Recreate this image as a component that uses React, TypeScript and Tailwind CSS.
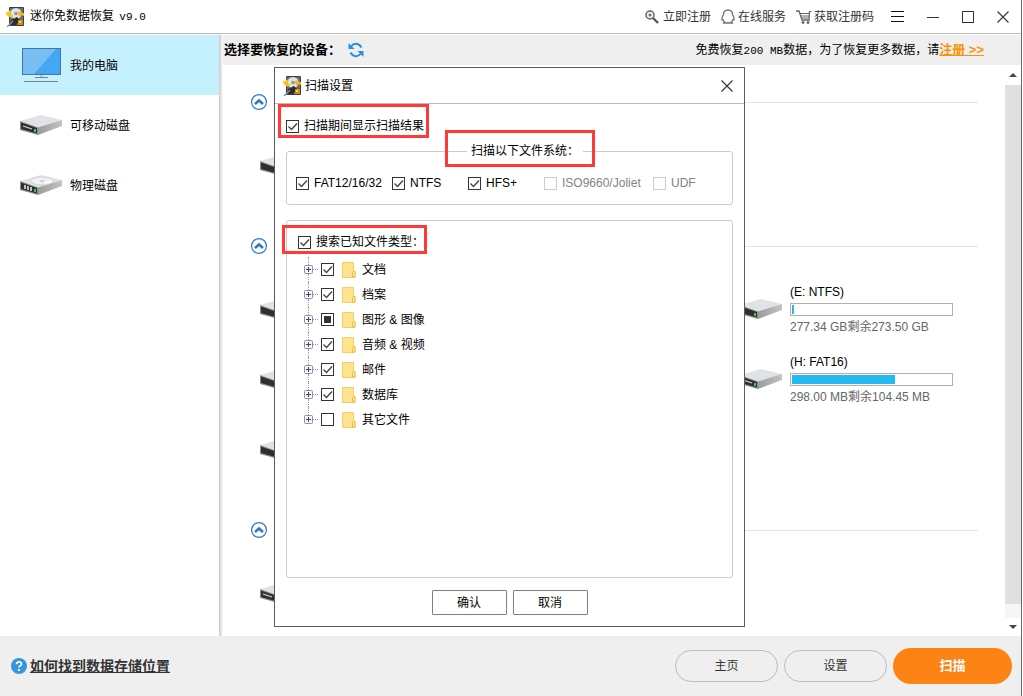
import { useId, type ReactNode } from "react";

function AppIcon() {
  return (
    <svg width="18" height="20" viewBox="0 0 18 20" className="shrink-0">
      <rect x="3" y="0" width="15" height="19" rx="1" fill="#3d4043" />
      <rect x="4" y="1" width="13" height="17" fill="#6b6f73" />
      <circle cx="10" cy="6.5" r="5.5" fill="#dfe3e6" />
      <circle cx="10" cy="6.5" r="1.8" fill="#8f979d" />
      <path d="M5 13l6-3 3 3-4 5H4z" fill="#2b2d2f" />
      <path d="M0 5h3c0 2 2 3 4 3v2.500C3 11 0 9 0 5z" fill="#f7c52b" />
      <path d="M11 6l3-2 1 1.500 3 .5v3l-3-1-1 2z" fill="#f7b51c" />
      <path d="M2.500 3l3.500 2-3 3z" fill="#f7c52b" />
      <rect x="12" y="13" width="5" height="5" fill="#d9890b" />
      <rect x="13" y="14" width="2" height="2" fill="#ffd84c" />
      <path d="M1 20l6-6" stroke="#8a8f93" strokeWidth="1.500" />
    </svg>
  );
}

function MonitorIcon() {
  return (
    <svg width="40" height="35" viewBox="0 0 40 35" className="shrink-0">
      <rect x="0.500" y="0.500" width="38" height="26" fill="#43a7f3" stroke="#4c7594" />
      <path d="M1 1h33L12 26H1z" fill="#76bff5" />
      <rect x="18" y="27" width="3" height="3" fill="#b9c6d0" />
      <path d="M13 29.500h13M2 33.500h34" stroke="#6d8798" />
    </svg>
  );
}

function DriveIcon({ variant = "slot" }: { variant?: "plain" | "slot" | "disk" }) {
  return (
    <svg width="42" height="21" viewBox="0 0 42 21" className="shrink-0">
      <defs>
        <linearGradient id="drive-side" x1="0" y1="0" x2="1" y2="0">
          <stop offset="0" stopColor="#9a9b9d" />
          <stop offset="1" stopColor="#c2c3c5" />
        </linearGradient>
      </defs>
      <path d="M0 6L21 0l21 5-24 8z" fill="#e1e2e6" />
      <path d="M18 12.500L42 5v6L18 20z" fill="url(#drive-side)" />
      <path d="M0 6l18 6.500V20L0 15z" fill="#8b8c8e" />
      <path d="M1 7.500l16 5.500v5.500L1 14z" fill="#2e2f31" />
      {variant === "slot" && <path d="M3 11l9 3" stroke="#d5d6d8" strokeWidth="1.200" />}
      {variant === "disk" && (
        <>
          <path d="M5 10v4M8 11v4M11 12v4" stroke="#f2f2f2" strokeWidth="1.500" />
          <ellipse cx="22" cy="6" rx="11" ry="4" fill="#f1f1f3" stroke="#c9cacd" strokeWidth="0.700" />
          <ellipse cx="22" cy="6" rx="2" ry="1" fill="#c9cacd" />
          <path d="M25 8l7-2" stroke="#fff" strokeWidth="1.500" />
        </>
      )}
      <rect x="14" y="14" width="2" height="3" fill="#45c94f" />
    </svg>
  );
}

function FolderIcon() {
  return (
    <svg width="14" height="16" viewBox="0 0 14 16" className="shrink-0">
      <path d="M0.500 0.500h11v9h1.500v6H0.500z" fill="#ffe48f" stroke="#f3cf63" />
      <path d="M10.500 15V10.500l1-1h1.500V15z" fill="#ffe9a6" stroke="#e9bd3c" />
    </svg>
  );
}

function CloseIcon() {
  return (
    <svg width="12" height="12" viewBox="0 0 12 12">
      <path d="M0.500 0.500l11 11M11.500 0.500l-11 11" stroke="#333" strokeWidth="1.100" />
    </svg>
  );
}

type CheckProps = {
  children?: ReactNode;
  label?: string;
  state?: "on" | "off" | "mixed";
  disabled?: boolean;
};

function Check({ children, label, state = "on", disabled }: CheckProps) {
  const id = useId();
  return (
    <div className="flex h-4 items-center gap-[5px]">
      <span className="grid">
        <input
          id={id}
          type="checkbox"
          aria-label={label}
          defaultChecked={state === "on"}
          disabled={disabled}
          ref={(el) => {
            if (el) el.indeterminate = state === "mixed";
          }}
          className="peer size-[13px] appearance-none border border-[#333] bg-white [grid-area:1/1] disabled:border-[#ccc]"
        />
        <svg
          viewBox="0 0 13 13"
          className="pointer-events-none invisible size-[13px] [grid-area:1/1] peer-checked:visible"
        >
          <path d="M2.500 6.500l3 3 5.500-6" fill="none" stroke="#444" strokeWidth="1.400" />
        </svg>
        <span className="pointer-events-none invisible m-[3px] size-[7px] bg-[#333] [grid-area:1/1] peer-indeterminate:visible" />
      </span>
      {children && (
        <label htmlFor={id} className={disabled ? "whitespace-nowrap text-[#838383]" : "whitespace-nowrap"}>
          {children}
        </label>
      )}
    </div>
  );
}

const fileTypes: { name: string; state: "on" | "off" | "mixed" }[] = [
  { name: "文档", state: "on" },
  { name: "档案", state: "on" },
  { name: "图形 & 图像", state: "mixed" },
  { name: "音频 & 视频", state: "on" },
  { name: "邮件", state: "on" },
  { name: "数据库", state: "on" },
  { name: "其它文件", state: "off" },
];

function FileTypeTree() {
  return (
    <ul className="mt-[7px] ml-1.5">
      {fileTypes.map((type, i) => (
        <li key={type.name} className="flex h-[25px] items-center">
          <div className="flex h-full w-[9px] flex-col items-center">
            <span className="w-px flex-1 border-l border-dotted border-[#999]" />
            <button aria-label={`展开${type.name}`} className="block">
              <svg width="9" height="9" viewBox="0 0 9 9">
                <rect x="0.500" y="0.500" width="8" height="8" rx="1" fill="#f7f7f7" stroke="#919191" />
                <path d="M2 4.500h5M4.500 2v5" stroke="#2b4a9b" />
              </svg>
            </button>
            {i < fileTypes.length - 1 ? (
              <span className="w-px flex-1 border-l border-dotted border-[#999]" />
            ) : (
              <span className="flex-1" />
            )}
          </div>
          <span className="mr-[3px] w-[5px] border-t border-dotted border-[#999]" />
          <Check state={type.state} label={type.name} />
          <span className="mr-1.5 ml-2">
            <FolderIcon />
          </span>
          <span>{type.name}</span>
        </li>
      ))}
    </ul>
  );
}

function ScanDialog() {
  return (
    <div className="pointer-events-none fixed inset-0 flex items-center justify-center pr-1 pb-0.5">
      <div
        role="dialog"
        aria-label="扫描设置"
        className="pointer-events-auto relative w-[471px] border border-[#5c5c5c] bg-white"
      >
        <div className="flex h-9 items-center border-b border-[#b9b9b9] pr-[11px] pl-2">
          <AppIcon />
          <h2 className="ml-1">扫描设置</h2>
          <button aria-label="关闭" className="ml-auto">
            <CloseIcon />
          </button>
        </div>

        <div className="px-[11px] pt-3.5 pb-[11px]">
          <Check>扫描期间显示扫描结果</Check>

          <fieldset className="mt-[9px] rounded-[3px] border border-[#ccc] px-[9px] pt-4 pb-[13px]">
            <legend className="ml-[171px] px-1 leading-4">扫描以下文件系统：</legend>
            <div className="grid grid-cols-[96px_76px_76px_109px_auto]">
              <Check>FAT12/16/32</Check>
              <Check>NTFS</Check>
              <Check>HFS+</Check>
              <Check state="off" disabled>
                ISO9660/Joliet
              </Check>
              <Check state="off" disabled>
                UDF
              </Check>
            </div>
          </fieldset>

          <div className="mt-[15px] min-h-[358px] rounded-[3px] border border-[#ccc] px-[11px] pt-[13px]">
            <Check>搜索已知文件类型：</Check>
            <FileTypeTree />
          </div>

          <div className="mt-3 flex justify-center gap-1.5">
            <button className="h-[25px] w-[75px] rounded-[1px] border border-[#708599]">确认</button>
            <button className="h-[25px] w-[75px] rounded-[1px] border border-[#708599]">取消</button>
          </div>
        </div>

        {/* Highlight frames */}
        <span className="pointer-events-none absolute top-9 left-[3px] h-[34px] w-[151px] border-3 border-[#ff3838]" />
        <span className="pointer-events-none absolute top-[62px] left-[170px] h-[37px] w-[150px] border-3 border-[#ff3838]" />
        <span className="pointer-events-none absolute top-[157px] left-[7px] h-[29px] w-[145px] border-3 border-[#ff3838]" />
      </div>
    </div>
  );
}

function DriveGroup({ children }: { children: ReactNode }) {
  return (
    <section className="mb-[38px]">
      <div className="flex h-4 items-center">
        <button aria-label="折叠">
          <svg width="16" height="16" viewBox="0 0 16 16" className="block">
            <circle cx="8" cy="8" r="7.400" fill="#fff" stroke="#2f78c8" strokeWidth="1.200" />
            <path d="M4 10l4-3.500L12 10" fill="none" stroke="#2f78c8" strokeWidth="2.600" />
          </svg>
        </button>
        <span className="ml-10 flex-1 border-t border-[#e4e4e4]" />
      </div>
      <div className="mt-5 ml-[9px] grid grid-cols-[240px_240px_1fr]">{children}</div>
    </section>
  );
}

type DriveProps = {
  variant?: "plain" | "slot";
  name?: string;
  size?: string;
  free?: string;
  used?: number;
};

function Drive({ variant, name, size, free, used }: DriveProps) {
  return (
    <div className="flex h-[70px] items-center">
      <DriveIcon variant={variant} />
      {name && (
        <div className="ml-2">
          <p className="leading-4">{name}</p>
          <div className="my-[3px] h-[13px] w-[163px] border border-[#b0b0b0] p-px">
            <div className="h-full bg-[#24b9ef]" style={{ width: `${used}%` }} />
          </div>
          <p className="leading-4 text-[#666]">
            {size}剩余{free}
          </p>
        </div>
      )}
    </div>
  );
}

function TitleBar() {
  return (
    <header className="mb-px flex h-[34px] shrink-0 items-center border-b border-[#b9b9b9] pr-3 pl-1.5">
      <AppIcon />
      <h1 className="ml-1.5 whitespace-nowrap">
        迷你免数据恢复 <span className="ml-0.5 font-['Liberation_Mono'] text-[11px]">v9.0</span>
      </h1>
      <nav className="ml-auto flex items-center text-[#333]">
        <button className="flex items-center gap-1">
          <svg width="14" height="14" viewBox="0 0 14 14">
            <circle cx="5" cy="5" r="4" fill="#eee" stroke="#666" strokeWidth="1.500" />
            <circle cx="5" cy="5" r="1.500" fill="#777" />
            <path d="M8 8l5 5" stroke="#555" strokeWidth="2.400" />
          </svg>
          立即注册
        </button>
        <button className="ml-2.5 flex items-center gap-[3px]">
          <svg width="14" height="15" viewBox="0 0 14 15" fill="#fff" stroke="#707070" strokeWidth="1.300">
            <path d="M7 1C4 1 2.500 3 2.500 5.500 1.500 7 .7 9 1 11l1-.3c.3 1 .8 1.500 1.500 2l-.8 1.300h3.600l.7-.4.7.4h3.600l-.8-1.300c.7-.5 1.200-1 1.500-2l1 .3c.3-2-.5-4-1.500-5.500C11.500 3 10 1 7 1z" />
          </svg>
          在线服务
        </button>
        <button className="ml-2.5 flex items-center gap-0.5">
          <svg width="16" height="14" viewBox="0 0 16 14" fill="none" stroke="#666">
            <path d="M0 1h3l3 9h8" strokeWidth="1.300" />
            <path d="M4 3.500h9M5 6h8M6 8h7M15.500 1.500h-2L13 9" strokeWidth="1.200" />
            <circle cx="7" cy="12.500" r="1" fill="#555" />
            <circle cx="12" cy="12.500" r="1" fill="#555" />
          </svg>
          获取注册码
        </button>
        <button aria-label="菜单" className="ml-[17px]">
          <svg width="14" height="12" viewBox="0 0 14 12">
            <path d="M0 0.500h13M0 5.500h13M0 10.500h13" stroke="#111" />
          </svg>
        </button>
        <button aria-label="最小化" className="ml-[22px]">
          <svg width="12" height="12" viewBox="0 0 12 12">
            <path d="M0 6.500h12" stroke="#333" />
          </svg>
        </button>
        <button aria-label="最大化" className="ml-[23px]">
          <svg width="12" height="12" viewBox="0 0 12 12">
            <rect x="0.500" y="0.500" width="11" height="11" fill="none" stroke="#333" />
          </svg>
        </button>
        <button aria-label="关闭" className="ml-[23px]">
          <CloseIcon />
        </button>
      </nav>
    </header>
  );
}

function Sidebar() {
  return (
    <nav className="w-[219px] shrink-0">
      <button className="flex h-[60px] w-full items-center bg-[#c5f1ff] pl-[22px]">
        <MonitorIcon />
        <span className="ml-2 pt-0.5">我的电脑</span>
      </button>
      <button className="flex h-[60px] w-full items-center pl-5">
        <DriveIcon />
        <span className="ml-2 pt-0.5">可移动磁盘</span>
      </button>
      <button className="flex h-[60px] w-full items-center pl-5">
        <DriveIcon variant="disk" />
        <span className="ml-2 pt-0.5">物理磁盘</span>
      </button>
    </nav>
  );
}

function ScrollBar() {
  return (
    <div className="flex w-4 shrink-0 flex-col">
      <span className="flex h-5 items-center justify-center">
        <svg width="8" height="4" viewBox="0 0 8 4">
          <path d="M0 4l4-4 4 4z" fill="#444" />
        </svg>
      </span>
      <span className="flex-1 bg-[#e0e0e0]" />
      <span className="h-3.5 bg-[#f6f6f6]" />
      <span className="flex h-[18px] items-center justify-center">
        <svg width="8" height="4" viewBox="0 0 8 4">
          <path d="M0 0h8L4 4z" fill="#444" />
        </svg>
      </span>
    </div>
  );
}

export default function App() {
  return (
    <div className="mr-px flex h-screen flex-col overflow-hidden border-r border-[#6a6a6a] bg-white font-['Liberation_Sans','Noto_Sans_CJK_SC',sans-serif] text-xs text-black">
      <TitleBar />

      <div className="flex min-h-0 flex-1">
        <Sidebar />
        <div className="w-1 shrink-0 bg-linear-to-r from-[#c8c8c8] to-white" />
        <main className="flex min-w-0 flex-1 flex-col">
          <div className="flex h-[30px] shrink-0 items-center bg-[#efefef] pr-[37px] pl-px whitespace-nowrap">
            <h2 className="text-[13px] font-bold">选择要恢复的设备：</h2>
            <button aria-label="刷新" className="ml-[7px]">
              <svg width="16" height="16" viewBox="0 0 16 16" fill="none" stroke="#2f8fdf" strokeWidth="2">
                <path d="M3 4.500C6 .5 11 1 13.500 5.500M13 11.500C10 15.500 5 15 2.500 10.500" />
                <path d="M0.500 1v6h6zM15.500 15V9h-6z" fill="#2f8fdf" stroke="none" />
              </svg>
            </button>
            <p className="ml-auto">
              免费恢复<span className="font-['Liberation_Mono'] text-[11px]">200 MB</span>
              数据，为了恢复更多数据，请
              <a href="#register" className="text-[13px] font-bold text-[#ff9100] underline">
                注册 &gt;&gt;
              </a>
            </p>
          </div>

          <div className="flex min-h-0 flex-1">
            <div className="min-w-0 flex-1 overflow-hidden pt-[29px] pr-[27px] pl-7">
              <DriveGroup>
                <Drive variant="plain" />
              </DriveGroup>
              <DriveGroup>
                <Drive variant="plain" />
                <span />
                <Drive variant="plain" name="(E: NTFS)" size="277.34 GB" free="273.50 GB" used={1} />
                <Drive variant="plain" />
                <span />
                <Drive variant="slot" name="(H: FAT16)" size="298.00 MB" free="104.45 MB" used={65} />
                <Drive variant="plain" />
              </DriveGroup>
              <DriveGroup>
                <Drive variant="slot" />
              </DriveGroup>
            </div>
            <ScrollBar />
          </div>
        </main>
      </div>

      <footer className="flex h-[60px] shrink-0 items-center gap-1.5 bg-[#efefef] pr-[9px] pl-[11px] text-[#333]">
        <svg width="16" height="16" viewBox="0 0 16 16">
          <circle cx="8" cy="8" r="8" fill="#3595e3" />
          <path d="M5.500 6.300c0-3.300 5-3.300 5-.3 0 1.800-2.500 1.700-2.500 3.500" fill="none" stroke="#fff" strokeWidth="1.700" />
          <rect x="7" y="11" width="2" height="2" fill="#fff" />
        </svg>
        <a href="#help" className="-ml-[3px] text-sm font-bold underline">
          如何找到数据存储位置
        </a>
        <button className="ml-auto h-8 w-[103px] rounded-full border border-[#bcbcbc]">主页</button>
        <button className="h-8 w-[103px] rounded-full border border-[#bcbcbc]">设置</button>
        <button className="h-9 w-[119px] rounded-full bg-[#fc8314] text-[13px] font-bold text-white">扫描</button>
      </footer>

      <ScanDialog />
    </div>
  );
}
